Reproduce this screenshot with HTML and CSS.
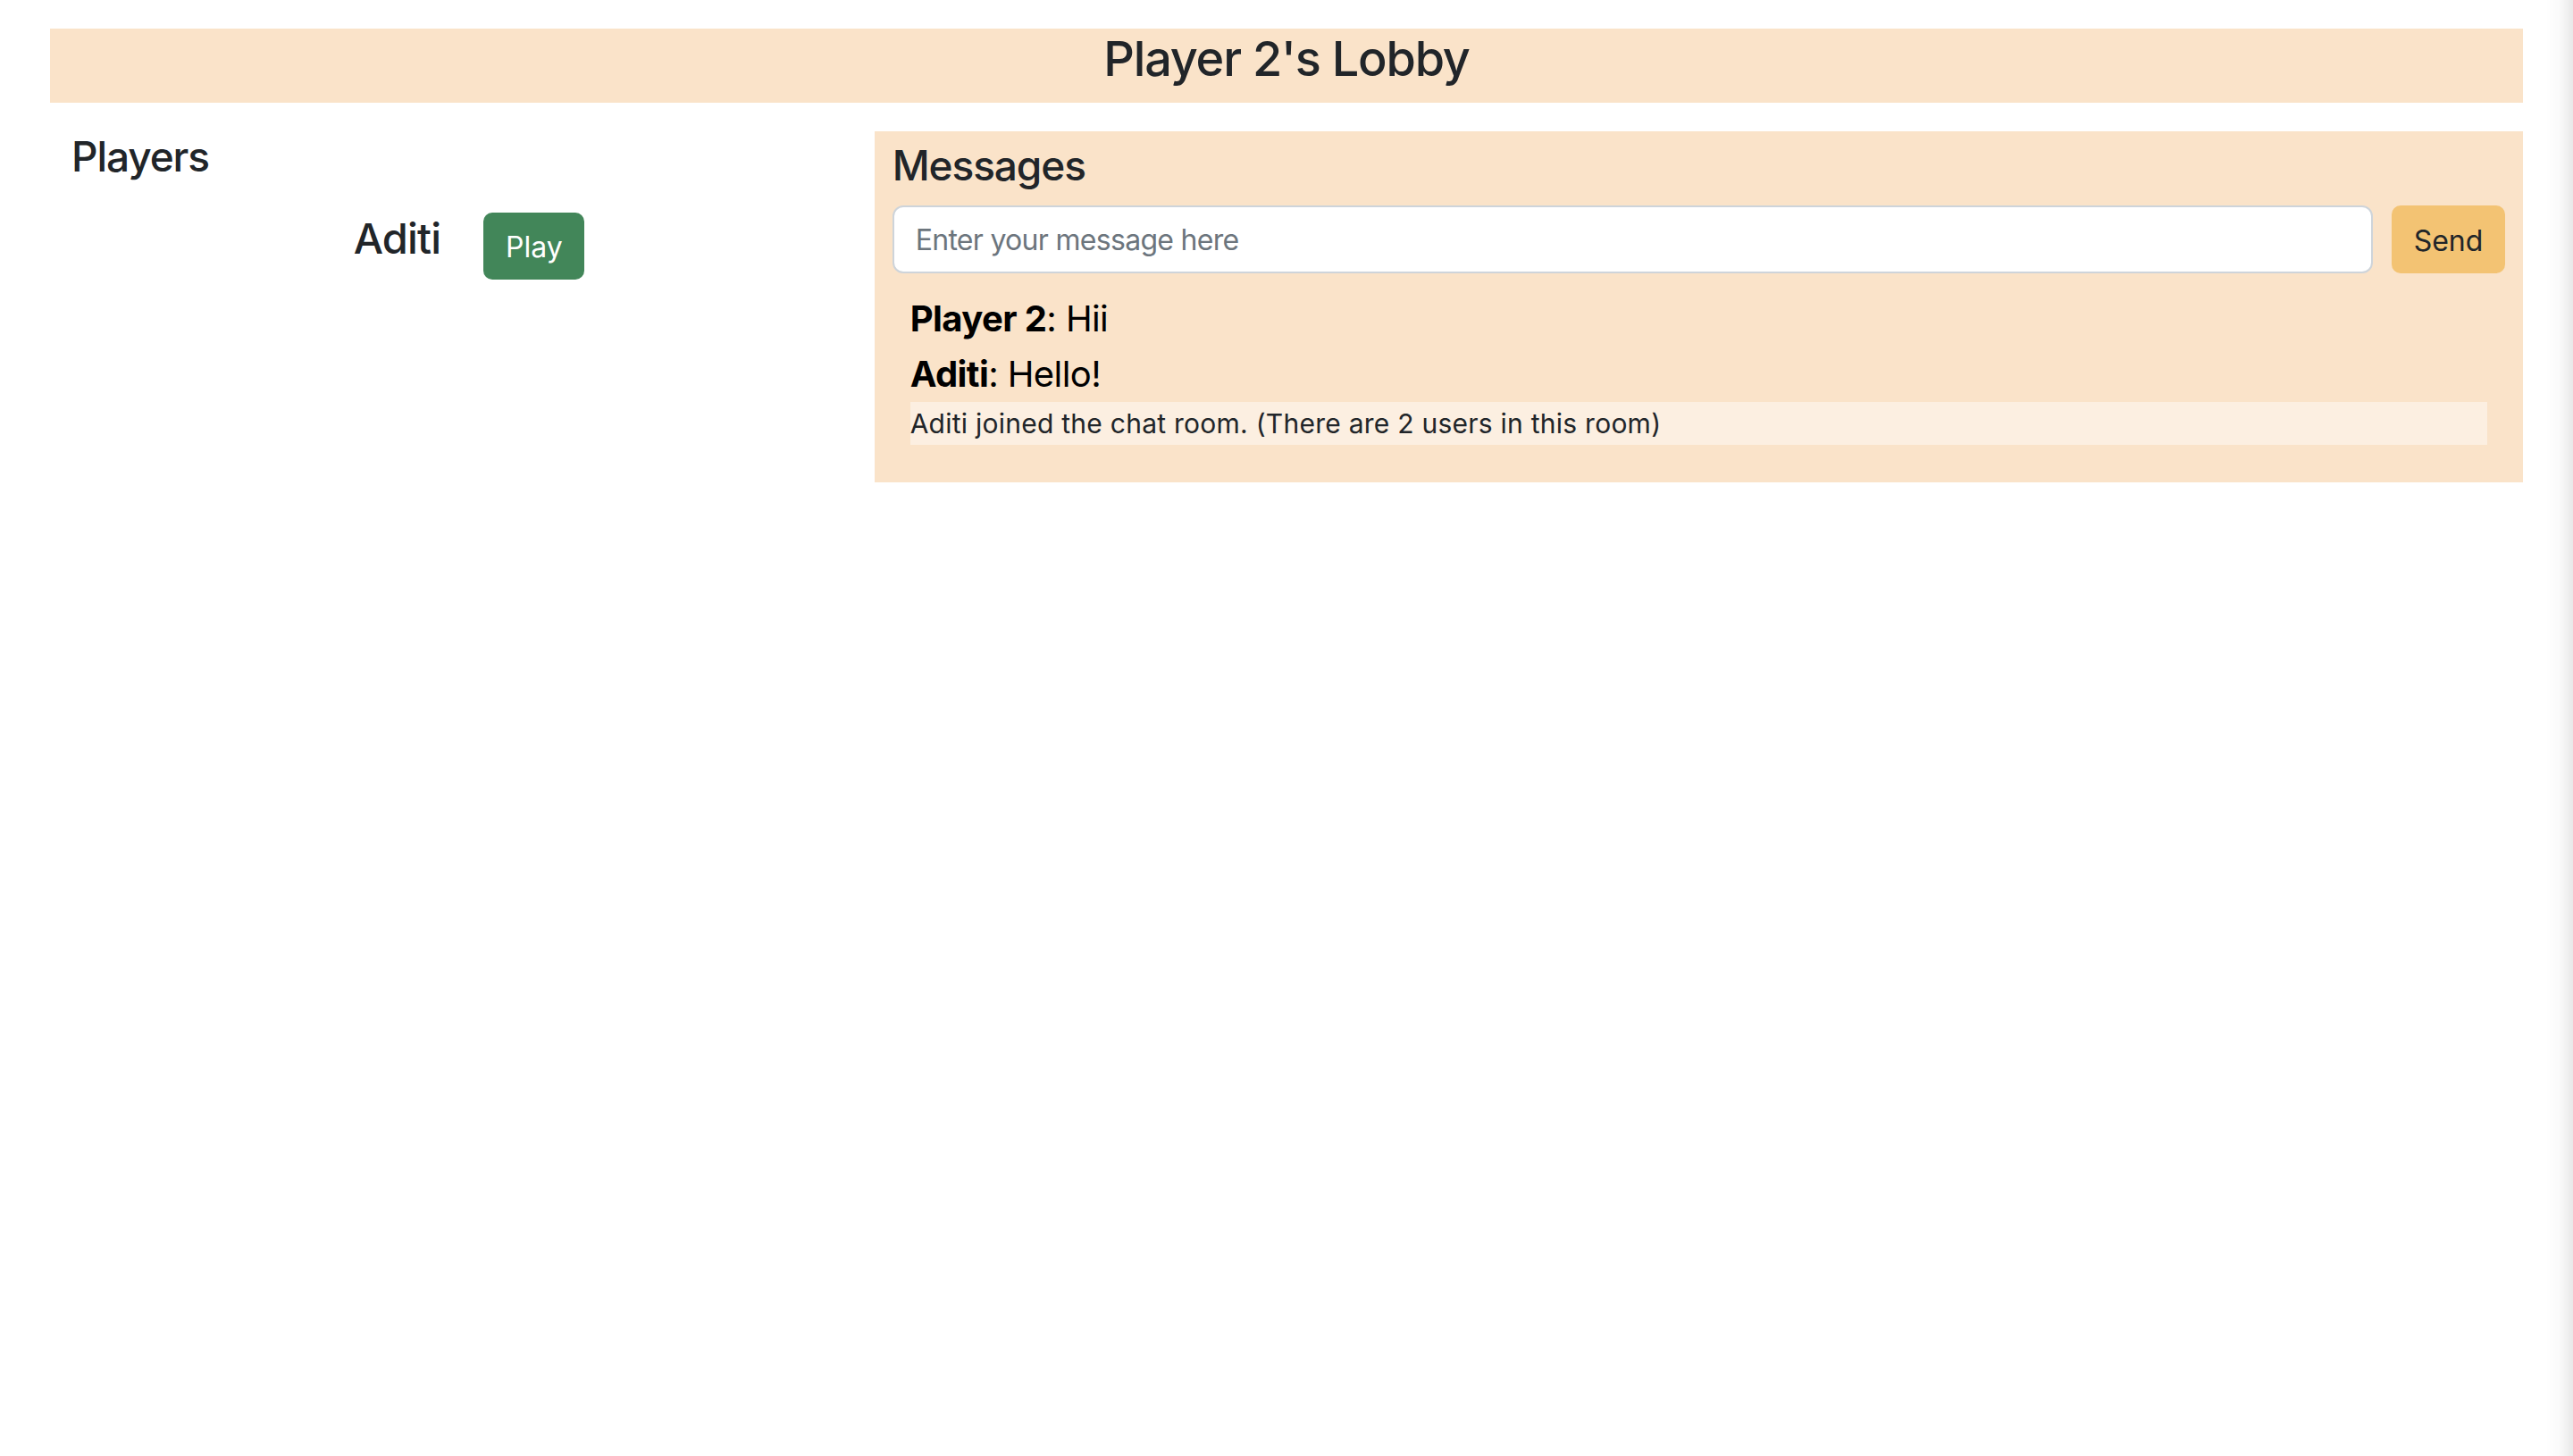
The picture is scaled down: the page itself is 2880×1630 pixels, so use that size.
FILE: index.html
```html
<!DOCTYPE html>
<html lang="en">
<head>
<meta charset="utf-8">
<title>Player 2's Lobby</title>
<link rel="stylesheet" href="styles.css">
</head>
<body>
<div class="page">
  <header class="lobby-header">
    <h3 class="lobby-title">Player 2's Lobby</h3>
  </header>
  <main class="lobby-main">
    <section class="players">
      <h4 class="section-title">Players</h4>
      <div class="player-row">
        <h4 class="player-name">Aditi</h4>
        <div class="player-action"><button class="btn btn-play" type="button">Play</button></div>
      </div>
    </section>
    <section class="chat">
      <h4 class="section-title">Messages</h4>
      <form class="composer">
        <input class="composer-input" type="text" placeholder="Enter your message here">
        <button class="btn btn-send" type="button">Send</button>
      </form>
      <ul class="message-list">
        <li class="message"><strong>Player 2</strong>: Hii</li>
        <li class="message"><strong>Aditi</strong>: Hello!</li>
        <li class="message-system">Aditi joined the chat room. (There are 2 users in this room)</li>
      </ul>
    </section>
  </main>
</div>
</body>
</html>
```
FILE: styles.css
```css
* { box-sizing: border-box; }

html, body {
  margin: 0;
  background: #ffffff;
}

body {
  font-family: Inter, "Liberation Sans", sans-serif;
  color: #212529;
  min-height: 100vh;
}

body::after {
  content: "";
  position: fixed;
  top: 0;
  right: 0;
  bottom: 0;
  width: 30px;
  background: linear-gradient(to right, rgba(0,0,0,0), rgba(0,0,0,0.02) 50%, rgba(0,0,0,0.09));
  pointer-events: none;
}

.page {
  padding: 32px 56px 0;
}

.lobby-header {
  background: #fae3c9;
  padding-bottom: 16px;
}

.lobby-title {
  margin: 0;
  text-align: center;
  font-size: 54px;
  font-weight: 500;
  line-height: 67px;
  letter-spacing: -1.2px;
}

.lobby-main {
  display: grid;
  grid-template-columns: 1fr 2fr;
  margin-top: 32px;
  align-items: start;
}

.section-title {
  margin: 0 0 16px;
  font-size: 46px;
  font-weight: 500;
  line-height: 57px;
  letter-spacing: -1.1px;
}

.players {
  padding: 0 24px;
}

.player-row {
  display: grid;
  grid-template-columns: 1fr 1fr;
  column-gap: 48px;
  align-items: start;
  margin-top: 34px;
}

.player-name {
  margin: 0;
  text-align: right;
  font-size: 47px;
  font-weight: 500;
  line-height: 57px;
  letter-spacing: -0.8px;
}

.btn {
  font-family: inherit;
  font-size: 32px;
  line-height: 48px;
  border: 0;
  border-radius: 10px;
  cursor: pointer;
}

.btn-play {
  background: #428659;
  color: #ffffff;
  height: 75px;
  width: 113px;
  padding: 3px 0 0;
}

.chat {
  background: #fae3c9;
  padding: 10px 20px 22px;
}

.composer {
  display: flex;
  gap: 21px;
  margin: 0;
}

.composer-input {
  flex: 1;
  height: 76px;
  border: 2px solid #ced4da;
  border-radius: 12px;
  background: #ffffff;
  padding: 0 24px;
  font-family: inherit;
  font-size: 32px;
  letter-spacing: -0.7px;
  color: #212529;
  outline: none;
}

.composer-input::placeholder {
  color: #6c757d;
}

.btn-send {
  background: #f3c373;
  color: #212529;
  height: 76px;
  width: 127px;
  padding: 3px 0 0;
}

.message-list {
  list-style: none;
  margin: 0;
  padding: 20px;
}

.message {
  font-size: 40px;
  line-height: 62px;
  color: #000000;
  letter-spacing: -0.6px;
}

.message strong {
  font-weight: 700;
}

.message-system {
  background: #fcefe1;
  font-size: 30px;
  line-height: 48px;
  letter-spacing: 0.25px;
  color: #212529;
}
```
